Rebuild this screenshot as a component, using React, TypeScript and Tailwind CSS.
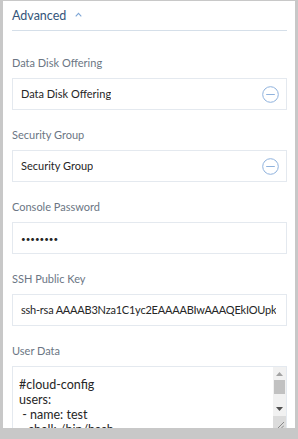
import React from "react";

const font = { fontFamily: 'Lato, "Open Sans", sans-serif' };

const MinusCircle = () => (
  <svg width="17" height="17" viewBox="0 0 17 17" fill="none">
    <circle cx="8.5" cy="8.5" r="7.8" stroke="#8fb2dd" strokeWidth="1" />
    <line x1="4.2" y1="8.5" x2="12.8" y2="8.5" stroke="#8fb2dd" strokeWidth="1" />
  </svg>
);

const Label = ({ children }: { children: React.ReactNode }) => (
  <div className="h-4 text-[11px] leading-4 text-[#6b7684]">{children}</div>
);

const Box = ({ children, icon }: { children: React.ReactNode; icon?: boolean }) => (
  <div className="mt-[7px] flex h-[32px] items-center justify-between border border-[#e4e9ef] pl-[8px] pr-[7px] text-[11px] text-[#262626]">
    <span className="overflow-hidden whitespace-nowrap">{children}</span>
    {icon && <MinusCircle />}
  </div>
);

const ScrollBar = () => (
  <div className="flex w-[13px] flex-col bg-[#f1f1f1]">
    <div className="flex h-[13px] items-center justify-center">
      <svg width="7" height="4" viewBox="0 0 7 4">
        <polygon points="0,4 7,4 3.5,0" fill="#a3a3a3" />
      </svg>
    </div>
    <div className="mx-[1px] h-[14px] bg-[#c1c1c1]" />
    <div className="flex-1" />
    <div className="flex h-[14px] items-center justify-center">
      <svg width="7" height="4" viewBox="0 0 7 4">
        <polygon points="0,0 7,0 3.5,4" fill="#505050" />
      </svg>
    </div>
    <div className="flex h-[15px] items-end justify-end bg-[#dcdcdc] p-[2px]">
      <svg width="8" height="8" viewBox="0 0 8 8">
        <line x1="1" y1="8" x2="8" y2="1" stroke="#8a8a8a" strokeWidth="1" />
        <line x1="4.5" y1="8" x2="8" y2="4.5" stroke="#8a8a8a" strokeWidth="1" />
      </svg>
    </div>
  </div>
);

export default function App() {
  return (
    <div className="h-[439px] w-[298px] bg-[#c8c8c8] px-[3px] pb-[11px] pt-[1px]" style={font}>
      <div className="h-full overflow-hidden bg-white pl-[9px] pr-[8px] pt-[5px]">
        <div className="flex h-5 items-center gap-[9px] text-[12.5px] leading-5 text-[#34557a]">
          <span>Advanced</span>
          <svg width="7" height="5" viewBox="0 0 7 5" fill="none" className="mt-[-4px]">
            <polyline points="0.7,4.3 3.5,1.3 6.3,4.3" stroke="#7ea6d6" strokeWidth="1.1" />
          </svg>
        </div>
        <div className="mt-[4px] border-b border-[#d5dfe9]" />

        <div className="mt-[24px]">
          <Label>Data Disk Offering</Label>
          <Box icon>Data Disk Offering</Box>
        </div>
        <div className="mt-[17px]">
          <Label>Security Group</Label>
          <Box icon>Security Group</Box>
        </div>
        <div className="mt-[17px]">
          <Label>Console Password</Label>
          <Box>
            <span className="text-[8px] tracking-[0]">••••••••</span>
          </Box>
        </div>
        <div className="mt-[17px]">
          <Label>SSH Public Key</Label>
          <Box>
            <span className="tracking-[-0.22px]">ssh-rsa AAAAB3Nza1C1yc2EAAAABIwAAAQEkIOUpk</span>
          </Box>
        </div>
        <div className="mt-[17px]">
          <Label>User Data</Label>
          <div className="mt-[7px] flex h-[66px] border border-[#e4e9ef] text-[12.5px] text-[#262626]">
            <div className="flex-1 overflow-hidden whitespace-pre pl-[6px] pt-[10px] leading-[15px]">
              {"#cloud-config\nusers:\n - name: test\n   shell: /bin/bash"}
            </div>
            <ScrollBar />
          </div>
        </div>
      </div>
    </div>
  );
}
